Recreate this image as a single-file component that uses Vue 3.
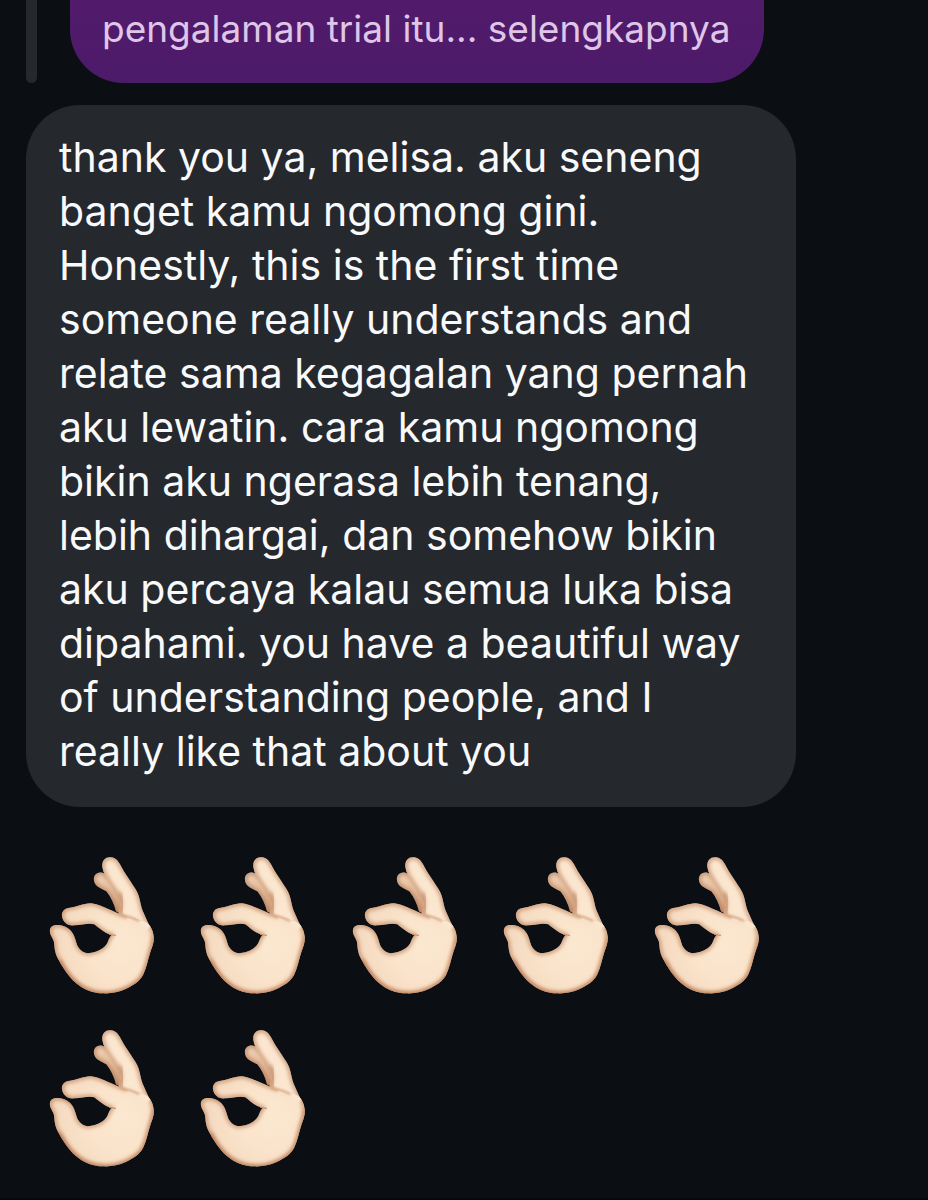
<template>
  <main class="chat">
    <!-- Hand drawing shared by all the emoji below -->
    <svg class="defs" width="0" height="0" aria-hidden="true">
      <defs>
        <radialGradient id="palmFill" gradientUnits="userSpaceOnUse" cx="240" cy="300" r="210">
          <stop offset="0" stop-color="#fbe8d0" />
          <stop offset="0.45" stop-color="#fae4cb" />
          <stop offset="1" stop-color="#f3d8be" />
        </radialGradient>
        <linearGradient id="backFill" gradientUnits="userSpaceOnUse" x1="165" y1="90" x2="250" y2="210">
          <stop offset="0" stop-color="#f0d2b6" />
          <stop offset="0.5" stop-color="#e2b997" />
          <stop offset="1" stop-color="#c9926f" />
        </linearGradient>
        <filter id="soft" x="-20%" y="-20%" width="140%" height="140%">
          <feGaussianBlur stdDeviation="7" />
        </filter>
        <filter id="fine" x="-20%" y="-50%" width="140%" height="200%">
          <feGaussianBlur stdDeviation="3" />
        </filter>
        <path id="backPath" d="M163 110C157 91 172 79 187 83C205 88 235 135 252 165L262 218L228 199C223 177 212 155 199 139C184 129 167 126 163 110Z" />
        <path id="frontPath" d="M187 66C185 45 198 35 213 37C226 38 234 47 240 58C254 86 278 117 291 140C301 160 301 180 308 197C316 217 326 234 334 257L260 245L236 205C243 184 243 164 235 149C219 126 192 98 187 66Z" />
        <path id="palmPath" d="M66 214C64 198 75 189 90 188C109 187 132 174 153 175C174 176 211 196 237 206C263 216 292 222 312 229C331 237 339 255 341 274C343 291 337 304 331 321C323 346 320 367 310 388C299 411 278 422 257 432C235 442 212 446 190 445C157 444 130 433 107 413C84 393 67 365 54 341C43 321 44 306 42 292C39 278 27 269 30 253C34 240 47 239 61 241C80 244 94 255 102 272C109 288 109 300 117 310C125 320 135 326 149 324C174 321 193 310 202 294C207 283 208 277 215 270C195 265 179 251 163 238C148 233 125 239 104 241C83 244 69 232 66 214Z" />
        <clipPath id="backClip"><use href="#backPath" /></clipPath>
        <clipPath id="frontClip"><use href="#frontPath" /></clipPath>
        <clipPath id="palmClip"><use href="#palmPath" /></clipPath>
        <symbol id="okHand" viewBox="0 0 375 480">
          <use href="#backPath" fill="url(#backFill)" />
          <g clip-path="url(#backClip)">
            <use href="#backPath" fill="none" stroke="#a96f50" stroke-width="8" filter="url(#soft)" />
          </g>
          <use href="#frontPath" fill="#fbe6d0" />
          <g clip-path="url(#frontClip)">
            <use href="#frontPath" fill="none" stroke="#bd8058" stroke-width="9" filter="url(#soft)" />
            <path d="M237 145C248 164 249 183 240 208" fill="none" stroke="#c28a63" stroke-width="10" filter="url(#soft)" />
          </g>
          <use href="#palmPath" fill="url(#palmFill)" />
          <g clip-path="url(#palmClip)">
            <use href="#palmPath" fill="none" stroke="#bd8058" stroke-width="9" filter="url(#soft)" />
            <path d="M54 347C82 407 126 450 190 452C240 453 291 431 313 399" fill="none" stroke="#bd7952" stroke-width="16" filter="url(#soft)" />
            <path d="M343 275C338 320 326 370 306 400" fill="none" stroke="#c98b63" stroke-width="10" filter="url(#soft)" />
            <path d="M262 214C285 220 305 224 330 246" fill="none" stroke="#fbe6d0" stroke-width="30" filter="url(#fine)" />
          </g>
          <path d="M240 208C262 213 280 219 296 228" fill="none" stroke="#d3a27d" stroke-width="5" stroke-linecap="round" filter="url(#fine)" />
          <path d="M209 268L226 271" fill="none" stroke="#c79470" stroke-width="4" stroke-linecap="round" />
        </symbol>
      </defs>
    </svg>

    <section class="reply">
      <span class="reply-bar"></span>
      <p class="reply-bubble">pengalaman trial itu... selengkapnya</p>
    </section>

    <p class="bubble">
      <span v-for="line in lines" :key="line" class="bubble-line">{{ line }}</span>
    </p>

    <div class="emojis">
      <svg v-for="n in emojiCount" :key="n" class="emoji" role="img" aria-label="👌🏻">
        <use href="#okHand" />
      </svg>
    </div>
  </main>
</template>

<script setup>
const emojiCount = 7

const lines = [
  'thank you ya, melisa. aku seneng',
  'banget kamu ngomong gini.',
  'Honestly, this is the first time',
  'someone really understands and',
  'relate sama kegagalan yang pernah',
  'aku lewatin. cara kamu ngomong',
  'bikin aku ngerasa lebih tenang,',
  'lebih dihargai, dan somehow bikin',
  'aku percaya kalau semua luka bisa',
  'dipahami. you have a beautiful way',
  'of understanding people, and I',
  'really like that about you'
]
</script>

<style>
body {
  margin: 0;
  background: #0b0f14;
}
</style>

<style scoped>
.chat {
  box-sizing: border-box;
  min-height: 100vh;
  padding: 0 26px;
  background: #0b0f14;
  border-bottom: 2px solid #06080e;
  font-family: Inter, "Liberation Sans", sans-serif;
}

.defs {
  position: absolute;
}

.reply {
  display: flex;
  gap: 33px;
}

.reply-bar {
  width: 11px;
  border-radius: 0 0 6px 6px;
  background: #25282d;
}

.reply-bubble {
  margin: 0;
  padding: 7px 34px 32px 32px;
  border-radius: 0 0 54px 54px;
  background: linear-gradient(#521a6b, #4c1b69);
  color: #dfc6e9;
  font-size: 37px;
  line-height: 44px;
}

.bubble {
  box-sizing: border-box;
  max-width: 770px;
  margin: 22px 0 0;
  padding: 25px 33px 29px;
  border-radius: 54px;
  background: #25282d;
  color: #f8f9fb;
  font-size: 41px;
  line-height: 54px;
}

.bubble-line {
  display: block;
}

.emojis {
  display: grid;
  grid-template-columns: repeat(5, 125px);
  justify-content: space-between;
  row-gap: 13px;
  max-width: 730px;
  margin: 38px 0 0 14px;
}

.emoji {
  width: 125px;
  height: 160px;
}
</style>
